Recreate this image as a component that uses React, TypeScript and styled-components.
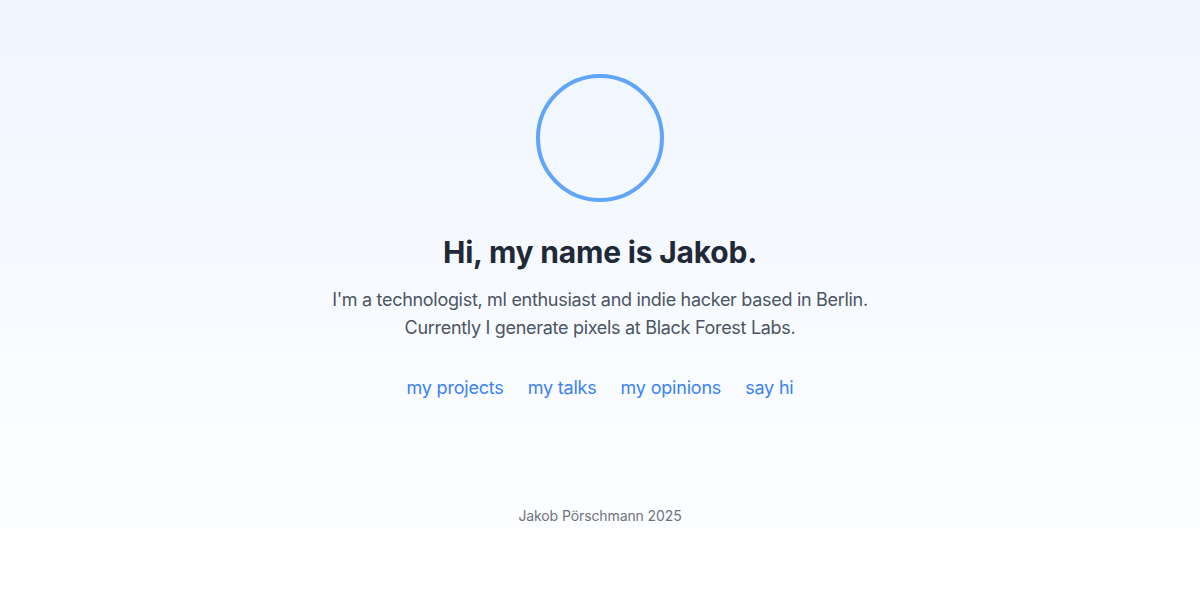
import React from "react";
import styled, { createGlobalStyle } from "styled-components";

const Global = createGlobalStyle`
  html, body { margin: 0; padding: 0; }
  body { font-family: Inter, "Noto Sans", sans-serif; }
  * { box-sizing: border-box; }
`;

const Page = styled.div`
  min-height: 600px;
  background: linear-gradient(to bottom, #eff6ff, #ffffff);
  display: flex;
  flex-direction: column;
  align-items: center;
  padding-top: 74px;
`;

const Main = styled.main`
  display: flex;
  flex-direction: column;
  align-items: center;
  text-align: center;
`;

const Avatar = styled.div`
  width: 128px;
  height: 128px;
  border-radius: 50%;
  border: 4px solid #60a5fa;
  margin-bottom: 32px;
`;

const Heading = styled.h1`
  margin: 0 0 16px;
  font-size: 30px;
  line-height: 36px;
  font-weight: 700;
  letter-spacing: -0.2px;
  color: #1f2937;
`;

const Intro = styled.p`
  margin: 0;
  font-size: 18px;
  line-height: 28px;
  letter-spacing: -0.3px;
  color: #4b5563;
`;

const Nav = styled.nav`
  display: flex;
  gap: 24px;
  margin-top: 32px;
`;

const NavLink = styled.a`
  font-size: 18px;
  line-height: 28px;
  letter-spacing: -0.2px;
  color: #3b82f6;
  text-decoration: none;
`;

const Footer = styled.footer`
  margin-top: 104px;
  font-size: 14px;
  line-height: 20px;
  letter-spacing: -0.1px;
  color: #6b7280;
`;

export default function App() {
  return (
    <>
      <Global />
      <Page>
        <Main>
          <Avatar />
          <Heading>Hi, my name is Jakob.</Heading>
          <Intro>
            I'm a technologist, ml enthusiast and indie hacker based in Berlin.
            <br />
            Currently I generate pixels at Black Forest Labs.
          </Intro>
          <Nav>
            <NavLink href="#">my projects</NavLink>
            <NavLink href="#">my talks</NavLink>
            <NavLink href="#">my opinions</NavLink>
            <NavLink href="#">say hi</NavLink>
          </Nav>
        </Main>
        <Footer>Jakob Pörschmann 2025</Footer>
      </Page>
    </>
  );
}
